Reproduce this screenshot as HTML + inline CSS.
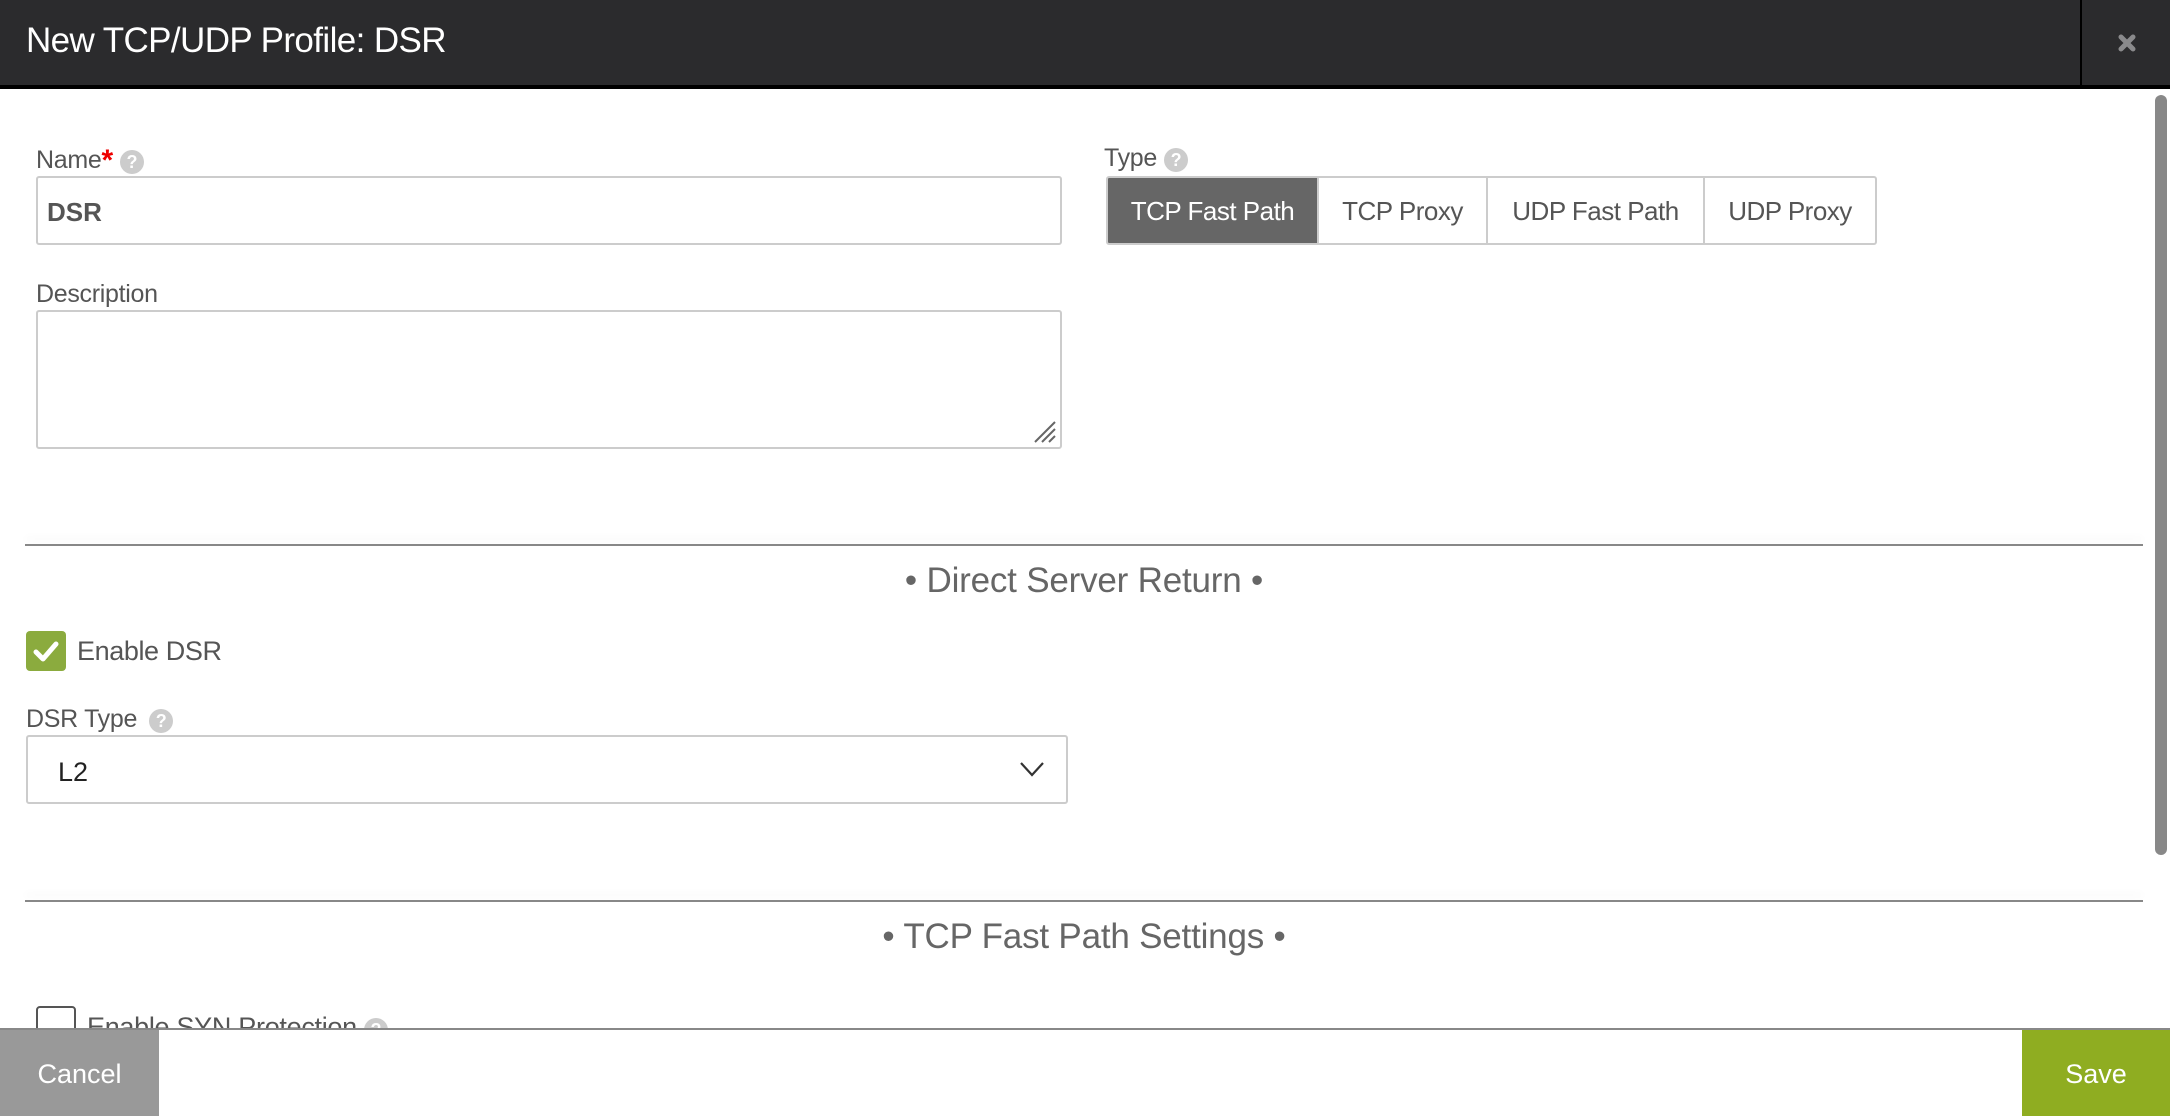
<!DOCTYPE html>
<html><head><meta charset="utf-8"><style>
*{box-sizing:border-box;margin:0;padding:0}
body{width:2170px;height:1116px;overflow:hidden;background:#fff;font-family:"Liberation Sans",sans-serif;color:#555;position:relative}
.abs{position:absolute}
.hdr{left:0;top:0;width:2170px;height:89px;background:#2b2b2d;border-bottom:4px solid #000}
.title{left:26px;top:21px;font-size:35px;color:#fff;letter-spacing:-0.6px}
.sep{left:2080px;top:0;width:2px;height:85px;background:#000}
.lbl{font-size:25px;color:#555;letter-spacing:-0.3px}
.q{display:inline-block;width:24px;height:24px;border-radius:50%;background:#ccc;color:#fff;font-size:18px;font-weight:bold;text-align:center;line-height:24px;vertical-align:0px;margin-left:7px}
.box{border:2px solid #ccc;border-radius:3px;background:#fff}
.btn{position:absolute;top:0;height:100%;font-size:26px;color:#555;text-align:center;line-height:66px;border-left:2px solid #ccc;letter-spacing:-0.5px}
.secline{left:25px;width:2118px;height:2px;background:#888;box-shadow:0 -6px 8px rgba(0,0,0,0.06)}
.sect{left:25px;width:2118px;text-align:center;font-size:35px;color:#666;letter-spacing:-0.2px}
</style></head><body>
<div class="abs hdr"></div>
<div class="abs title">New TCP/UDP Profile: DSR</div>
<div class="abs sep"></div>
<svg class="abs" style="left:2117px;top:33px" width="20" height="20" viewBox="0 0 20 20"><path d="M4 4L16 16M16 4L4 16" stroke="#8a8a8c" stroke-width="5" stroke-linecap="round"/></svg>
<div class="abs" style="left:2155px;top:95px;width:12px;height:760px;background:#888;border-radius:6px"></div>

<div class="abs lbl" style="left:36px;top:144px">Name<span style="color:#e00;font-weight:bold;font-size:30px;vertical-align:-2px">*</span><span class="q">?</span></div>
<div class="abs box" style="left:36px;top:176px;width:1026px;height:69px"></div>
<div class="abs" style="left:47px;top:197px;font-size:26px;font-weight:bold;color:#555">DSR</div>

<div class="abs lbl" style="left:36px;top:280px">Description</div>
<div class="abs box" style="left:36px;top:310px;width:1026px;height:139px"></div>
<svg class="abs" style="left:1033px;top:420px" width="26" height="26" viewBox="0 0 26 26"><path d="M22 2L2 22M22 9L9 22M22 16L16 22" stroke="#666" stroke-width="2"/></svg>

<div class="abs lbl" style="left:1104px;top:144px">Type<span class="q">?</span></div>
<div class="abs box" style="left:1106px;top:176px;width:771px;height:69px;overflow:hidden">
<div class="btn" style="left:0;width:209px;background:#666;color:#fff;border-left:none">TCP Fast Path</div>
<div class="btn" style="left:209px;width:169px">TCP Proxy</div>
<div class="btn" style="left:378px;width:217px">UDP Fast Path</div>
<div class="btn" style="left:595px;width:172px">UDP Proxy</div>
</div>

<div class="abs secline" style="top:544px"></div>
<div class="abs sect" style="top:561px">• Direct Server Return •</div>

<div class="abs" style="left:26px;top:631px;width:40px;height:40px;background:#8bab3e;border-radius:4px"></div>
<svg class="abs" style="left:26px;top:631px" width="40" height="40" viewBox="0 0 40 40"><path d="M10 21L17 28L30 13" stroke="#fff" stroke-width="5" fill="none" stroke-linecap="round" stroke-linejoin="round"/></svg>
<div class="abs" style="left:77px;top:636px;font-size:27px;color:#555;letter-spacing:-0.4px">Enable DSR</div>

<div class="abs lbl" style="left:26px;top:705px">DSR Type<span class="q" style="margin-left:12px">?</span></div>
<div class="abs box" style="left:26px;top:735px;width:1042px;height:69px"></div>
<div class="abs" style="left:58px;top:757px;font-size:27px;color:#222">L2</div>
<svg class="abs" style="left:1019px;top:760px" width="26" height="18" viewBox="0 0 26 18"><path d="M2 3L13 15L24 3" stroke="#333" stroke-width="2.2" fill="none"/></svg>

<div class="abs secline" style="top:900px"></div>
<div class="abs sect" style="top:917px">• TCP Fast Path Settings •</div>

<div class="abs" style="left:36px;top:1006px;width:40px;height:40px;border:2px solid #555;border-radius:4px"></div>
<div class="abs" style="left:87px;top:1012px;font-size:27px;color:#555;letter-spacing:-0.3px">Enable SYN Protection<span class="q">?</span></div>

<div class="abs" style="left:0;top:1028px;width:2170px;height:88px;background:#fff;border-top:2px solid #888"></div>
<div class="abs" style="left:0;top:1030px;width:159px;height:86px;background:#999;color:#fff;font-size:27px;text-align:center;line-height:88px">Cancel</div>
<div class="abs" style="left:2022px;top:1030px;width:148px;height:86px;background:#8fad21;color:#fff;font-size:27px;text-align:center;line-height:88px">Save</div>
</body></html>
